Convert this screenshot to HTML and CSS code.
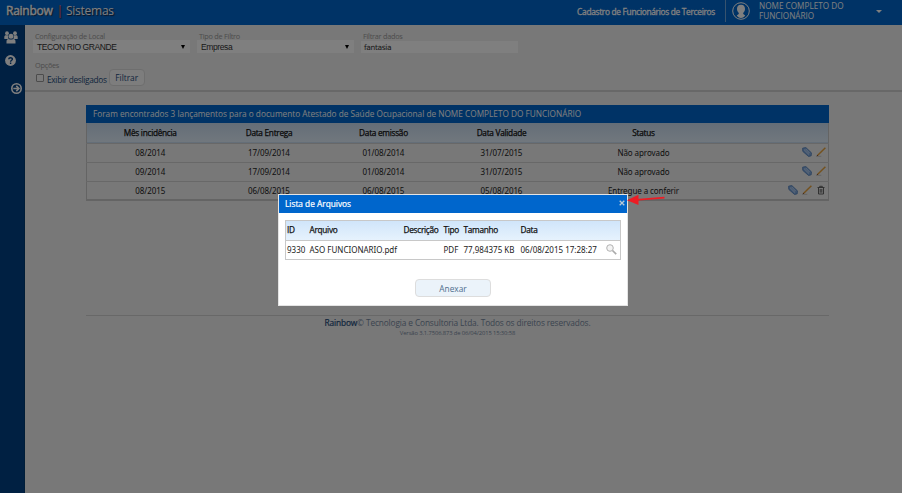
FILE: index.html
```html
<!DOCTYPE html>
<html lang="pt-BR">
<head>
    <meta charset="UTF-8">
    <title>Rainbow | Sistemas</title>
    <link rel="stylesheet" href="styles.css">
</head>
<body>
    <svg class="sprite" width="0" height="0">
        <symbol id="clip" viewBox="0 0 10 10">
            <path d="M.6 1.200L3.800.5 9.400 5.800 9.200 8.800 6.600 9.500.8 4.400z" fill="#7fa8dc" stroke="#4f7fbc" stroke-width=".8"/>
            <path d="M2 2.600l5 4.900M3.700 2l4 4.200" stroke="#dceaff" stroke-width=".8" fill="none"/>
        </symbol>
        <symbol id="pencil" viewBox="0 0 10 10">
            <path d="M.3 9.300h5" stroke="#b9b9b9" stroke-width=".7"/>
            <path d="M1.700 8.200L9.400.8" stroke="#e8a33c" stroke-width="1.500"/>
            <path d="M.8 9.100l1.200-1.200" stroke="#8a4a20" stroke-width="1"/>
        </symbol>
        <symbol id="trash" viewBox="0 0 10 10">
            <path d="M1.500 2.500h7M3.700 2.200V1.300h2.600v.9M2.500 3v6h5V3M4.200 4v3.700M5.800 4v3.700" stroke="#555" stroke-width=".9" fill="none"/>
        </symbol>
    </svg>

    <header class="topbar">
        <div class="brand"><b>Rainbow</b><i>|</i><span>Sistemas</span></div>
        <div class="module">Cadastro de Funcionários de Terceiros</div>
        <div class="user">
            <svg class="avatar" viewBox="0 0 18 18">
                <circle cx="9" cy="9" r="8.300" fill="none" stroke="#fff" stroke-width="1"/>
                <path d="M9 2.800c2.600 0 4 1.600 4 4.100 0 1.700-.8 3.200-1.900 4 .1 1.100.5 1.600 2.100 2.300C12.300 15 11 16 9 16s-3.300-1-4.200-2.800c1.600-.7 2-1.200 2.100-2.300C5.800 10.100 5 8.600 5 6.900c0-2.500 1.400-4.100 4-4.100z" fill="#fff"/>
            </svg>
            <span class="user-name">NOME COMPLETO DO FUNCIONÁRIO</span>
            <span class="caret"></span>
        </div>
    </header>

    <div class="page">
        <nav class="sidebar">
            <svg class="ico-users" viewBox="0 0 14 13" fill="#fff">
                <circle cx="3" cy="2.200" r="1.900"/>
                <circle cx="11" cy="2.200" r="1.900"/>
                <path d="M.3 7.800V6.200c0-1.300.7-1.900 1.600-1.900h2.300c-.5 1.300-.2 2.300.6 3.100L3.700 8H.5zM13.700 7.800V6.200c0-1.300-.7-1.900-1.600-1.900H9.800c.5 1.300.2 2.300-.6 3.100l1.100.6h3.200z"/>
                <circle cx="7" cy="5.200" r="2.500"/>
                <path d="M2.500 12.500v-2c0-1.800 1-2.500 2.300-2.500 1.300.8 3.100.8 4.400 0 1.300 0 2.300.7 2.300 2.500v2z"/>
            </svg>
            <svg class="ico-help" viewBox="0 0 11 11">
                <circle cx="5.500" cy="5.500" r="5.400" fill="#fff"/>
                <path d="M3.700 4.200c.1-2 3.800-2 3.700 0C7.400 5.300 5.600 5.300 5.600 6.700M5.600 7.500v1.400" stroke="#004084" stroke-width="1.400" fill="none"/>
            </svg>
            <svg class="ico-go" viewBox="0 0 11 11">
                <circle cx="5.500" cy="5.500" r="4.700" fill="none" stroke="#fff" stroke-width="1.600"/>
                <path d="M2.300 5.500h5.500M5.300 2.900l2.600 2.600-2.600 2.600" stroke="#fff" stroke-width="1.600" fill="none"/>
            </svg>
        </nav>

        <div class="content">
            <form class="filters">
                <div class="row">
                    <div class="field">
                        <label>Configuração de Local</label>
                        <div class="select">TECON RIO GRANDE<i></i></div>
                    </div>
                    <div class="field">
                        <label>Tipo de Filtro</label>
                        <div class="select">Empresa<i></i></div>
                    </div>
                    <div class="field">
                        <label>Filtrar dados</label>
                        <div class="text">fantasia</div>
                    </div>
                </div>
                <label class="opt-label">Opções</label>
                <div class="options">
                    <span class="check"></span>
                    <span class="check-label">Exibir desligados</span>
                    <button type="button" class="btn">Filtrar</button>
                </div>
            </form>

            <main>
                <div class="caption">Foram encontrados 3 lançamentos para o documento Atestado de Saúde Ocupacional de NOME COMPLETO DO FUNCIONÁRIO</div>
                <table class="grid">
                    <colgroup><col class="c1"><col class="c2"><col class="c3"><col class="c4"><col class="c5"><col></colgroup>
                    <tr><th>Mês incidência</th><th>Data Entrega</th><th>Data emissão</th><th>Data Validade</th><th>Status</th><th></th></tr>
                    <tr>
                        <td>08/2014</td><td>17/09/2014</td><td>01/08/2014</td><td>31/07/2015</td><td>Não aprovado</td>
                        <td class="actions"><svg><use href="#clip"/></svg><svg><use href="#pencil"/></svg></td>
                    </tr>
                    <tr>
                        <td>09/2014</td><td>17/09/2014</td><td>01/08/2014</td><td>31/07/2015</td><td>Não aprovado</td>
                        <td class="actions"><svg><use href="#clip"/></svg><svg><use href="#pencil"/></svg></td>
                    </tr>
                    <tr>
                        <td>08/2015</td><td>06/08/2015</td><td>06/08/2015</td><td>05/08/2016</td><td>Entregue a conferir</td>
                        <td class="actions"><svg><use href="#clip"/></svg><svg><use href="#pencil"/></svg><svg><use href="#trash"/></svg></td>
                    </tr>
                </table>
            </main>

            <footer>
                <p><b>Rainbow</b>© Tecnologia e Consultoria Ltda. Todos os direitos reservados.</p>
                <small>Versão 3.1.7506.873 de 06/04/2015 15:30:58</small>
            </footer>
        </div>
    </div>

    <div class="overlay">
        <div class="modal">
            <div class="modal-title">
                <span>Lista de Arquivos</span>
                <svg class="close" viewBox="0 0 6 6"><path d="M.7.7l4.600 4.600M5.300.7L.7 5.300" stroke="#b9c9d6" stroke-width="1.300"/></svg>
            </div>
            <table class="files">
                <colgroup><col class="f1"><col class="f2"><col class="f3"><col class="f4"><col class="f5"><col class="f6"><col></colgroup>
                <tr><th>ID</th><th>Arquivo</th><th>Descrição</th><th>Tipo</th><th>Tamanho</th><th>Data</th><th></th></tr>
                <tr>
                    <td>9330</td><td>ASO FUNCIONARIO.pdf</td><td></td><td>PDF</td><td>77,984375 KB</td><td>06/08/2015 17:28:27</td>
                    <td><svg class="lens" viewBox="0 0 11 11"><circle cx="4" cy="4" r="3.300" fill="#f4f4f4" stroke="#aaa" stroke-width=".9"/><path d="M6.500 6.500l3.700 3.700" stroke="#aaa" stroke-width="1.700"/></svg></td>
                </tr>
            </table>
            <button type="button" class="attach">Anexar</button>
        </div>
        <svg class="arrow" viewBox="0 0 38 12">
            <path d="M9 5.800L37.500 3.600" stroke="#ed1c24" stroke-width="1.800"/>
            <path d="M0 6.200L11.500.7v10.300z" fill="#ed1c24"/>
        </svg>
    </div>
</body>
</html>
```
FILE: styles.css
```css
* {
    box-sizing: border-box;
}
body {
    margin: 0;
    height: 493px;
    overflow: hidden;
    font-family: "Open Sans", sans-serif;
    font-size: 8.3px;
    background: #f0f0f0;
    white-space: nowrap;
}
.sprite {
    position: absolute;
}
svg {
    display: block;
}
.topbar {
    display: flex;
    align-items: center;
    height: 25px;
    background: #0066cc;
    color: #fff;
}
.brand {
    display: flex;
    flex: 1;
    padding: 0 0 4px 6px;
    font-size: 12px;
    letter-spacing: -0.25px;
    text-shadow: 1px 1px 1px #223;
}
.brand b {
    font-weight: 400;
    -webkit-text-stroke: 0.4px #fff;
}
.brand i {
    margin: 0 3px 0 4px;
    font-style: normal;
    color: #ff6a5a;
}
.module {
    margin-right: 10px;
    padding-bottom: 3px;
    letter-spacing: -0.28px;
    -webkit-text-stroke: 0.3px #fff;
}
.user {
    display: flex;
    align-items: center;
    width: 177px;
    height: 22px;
    margin-bottom: 3px;
    border-left: 1px solid #6fa6dd;
}
.avatar {
    width: 18px;
    height: 18px;
    margin-left: 6px;
}
.user-name {
    width: 100px;
    margin-left: 9px;
    font-size: 8.2px;
    line-height: 10px;
    white-space: normal;
}
.caret {
    margin-left: 17px;
    border: 3px solid transparent;
    border-top-color: #fff;
    border-bottom: 0;
}
.page {
    display: flex;
    height: 468px;
}
.sidebar {
    width: 25px;
    background: #004084;
    border-right: 1px solid #003a70;
}
.ico-users {
    width: 14px;
    height: 13px;
    margin: 6px 0 0 4px;
}
.ico-help {
    width: 11px;
    height: 11px;
    margin: 11px 0 0 5px;
}
.ico-go {
    width: 11px;
    height: 11px;
    margin: 17px 0 0 11px;
}
.content {
    flex: 1;
}
.filters {
    height: 67px;
    padding: 6px 0 0 8px;
    border-bottom: 2px solid #d0d0d0;
}
.row {
    display: flex;
    gap: 7px;
}
.field {
    width: 157px;
}
label {
    display: block;
    height: 9px;
    padding-left: 2px;
    font-size: 7.3px;
    line-height: 10px;
    letter-spacing: -0.25px;
    color: #9a9a9a;
}
.select, .text {
    display: flex;
    align-items: center;
    justify-content: space-between;
    height: 13px;
    padding: 0 5px 0 4px;
    background: #fff;
    font: 8.5px "Liberation Sans", sans-serif;
    color: #333;
}
.select {
    letter-spacing: -0.4px;
}
.text {
    height: 12px;
    margin-top: 1px;
    padding-left: 3px;
    font-family: "DejaVu Sans", sans-serif;
    font-size: 7.5px;
    letter-spacing: -0.35px;
}
.select i {
    border: 2px solid transparent;
    border-top: 4px solid #000;
    border-bottom: 0;
}
.opt-label {
    margin-top: 7px;
}
.options {
    display: flex;
    align-items: center;
    margin-left: 3px;
}
.check {
    width: 8px;
    height: 8px;
    border: 1px solid #999;
    border-radius: 1px;
    background: #f4f4f4;
}
.check-label {
    margin: 3px 2px 0 3px;
    letter-spacing: -0.3px;
    color: #234a7a;
}
.btn, .attach {
    border: 1px solid #ddd;
    border-radius: 4px;
    background: #fafafa;
    font: 8.3px "Open Sans", sans-serif;
    color: #234a7a;
}
.btn {
    width: 36px;
    height: 17px;
    padding: 0;
}
main {
    width: 743px;
    margin: 13px 0 0 61px;
}
.caption {
    height: 18px;
    padding-left: 7px;
    background: #0066cc;
    font-size: 8.25px;
    line-height: 17px;
    color: #fff;
}
table {
    width: 100%;
    table-layout: fixed;
    border-collapse: collapse;
}
th {
    padding: 0;
    font-size: 8.25px;
    font-weight: 400;
    letter-spacing: -0.27px;
    -webkit-text-stroke: 0.25px #111;
    color: #111;
}
td {
    padding: 0;
    font-family: "Noto Sans", sans-serif;
    font-size: 8px;
    color: #222;
    text-align: center;
}
.grid {
    border: 1px solid #c8c8c8;
    border-bottom-width: 2px;
    border-top: 0;
}
.grid tr {
    height: 19px;
    border-bottom: 1px solid #d0d0d0;
}
.grid tr:first-child {
    height: 20px;
    background: linear-gradient(#c9dcf0, #e2effb);
}
.grid td {
    letter-spacing: -0.08px;
}
.c1 { width: 127px; }
.c2 { width: 111px; }
.c3 { width: 118px; }
.c4 { width: 118px; }
.c5 { width: 166px; }
.actions svg {
    display: inline-block;
    width: 10px;
    height: 10px;
    margin-left: 4px;
    vertical-align: middle;
}
td.actions {
    padding: 0 2px 2px 0;
    text-align: right;
}
footer {
    width: 743px;
    margin: 114px 0 0 61px;
    border-top: 1px solid #d0d0d0;
    text-align: center;
    color: #7688a0;
}
footer p {
    margin: 0;
    font-size: 8.3px;
    line-height: 13px;
    letter-spacing: -0.12px;
}
footer b {
    font-weight: 400;
    -webkit-text-stroke: 0.2px #234a7a;
    color: #234a7a;
}
footer small {
    display: block;
    font-size: 5.8px;
    line-height: 9px;
    letter-spacing: -0.1px;
}
.overlay {
    position: fixed;
    inset: 0;
    background: rgba(0, 0, 0, 0.5);
}
.modal {
    position: absolute;
    left: 278px;
    top: 194px;
    width: 350px;
    height: 112px;
    border: 1px solid #e4e4e4;
    background: #fff;
}
.modal-title {
    display: flex;
    align-items: center;
    justify-content: space-between;
    height: 18px;
    padding: 0 2px 1px 6px;
    background: #0066cc;
    -webkit-text-stroke: 0.2px #fff;
    color: #fff;
}
.close {
    width: 6px;
    height: 6px;
    margin-bottom: 2px;
}
.files {
    width: 336px;
    margin: 7px 0 0 6px;
    border: 1px solid #c8c8c8;
}
.files tr {
    height: 19px;
}
.files tr:first-child {
    height: 20px;
    background: linear-gradient(#d0e5fa, #e6f2fd);
    border-bottom: 1px solid #c8c8c8;
}
.files th, .files td {
    padding: 0 0 2px 2px;
    text-align: left;
}
.files th:first-child, .files td:first-child {
    padding-left: 1px;
}
.f1 { width: 22px; }
.f2 { width: 94px; }
.f3 { width: 40px; }
.f4 { width: 20px; }
.f5 { width: 57px; }
.f6 { width: 85px; }
.lens {
    width: 11px;
    height: 11px;
}
.attach {
    display: block;
    width: 76px;
    height: 18px;
    margin: 19px auto 0;
    padding: 0;
    background: #ebf3fa;
    color: #4d6d8d;
}
.arrow {
    position: absolute;
    left: 627px;
    top: 194px;
    width: 38px;
    height: 12px;
}
```
